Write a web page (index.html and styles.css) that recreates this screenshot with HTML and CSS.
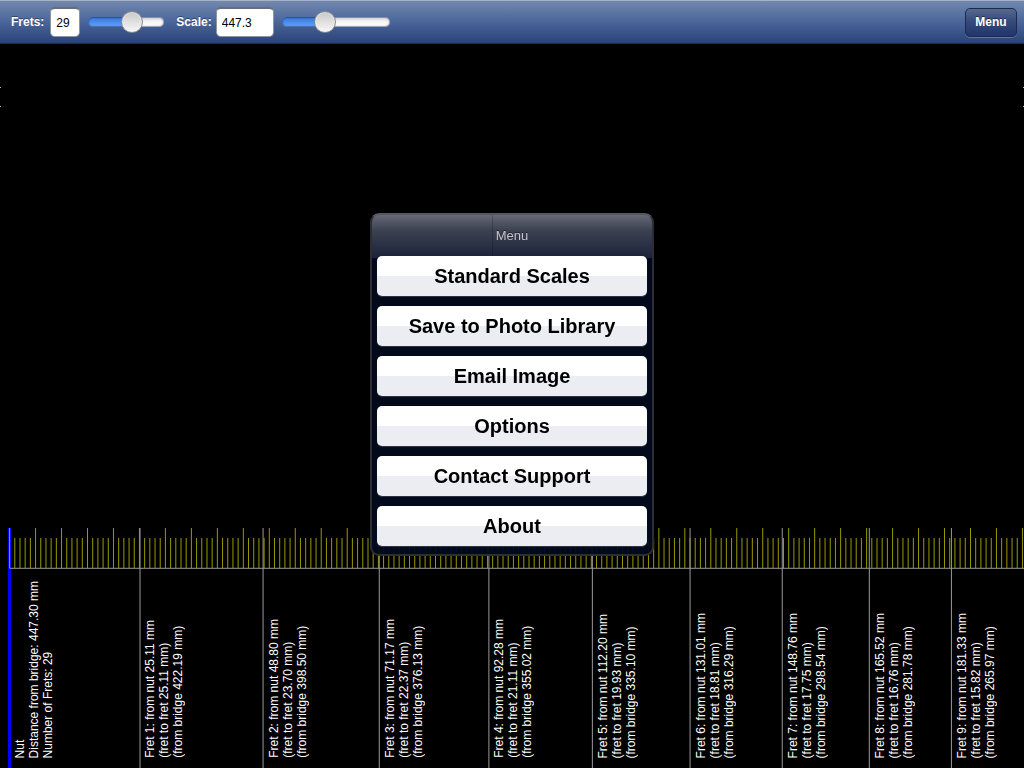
FILE: index.html
```html
<!DOCTYPE html>
<html lang="en">
<head>
<meta charset="utf-8">
<title>Fret Calculator</title>
<link rel="stylesheet" href="styles.css">
</head>
<body>
<header class="toolbar">
  <label class="toolbar-label" for="frets">Frets:</label>
  <input class="field field-small" id="frets" type="text" value="29">
  <input class="slider slider-short" type="range" min="0" max="48" value="29" aria-label="Number of frets">
  <label class="toolbar-label" for="scale">Scale:</label>
  <input class="field" id="scale" type="text" value="447.3">
  <input class="slider" type="range" min="0" max="1183" step="0.1" value="447.3" aria-label="Scale length">
  <button class="menu-button" type="button">Menu</button>
</header>

<main class="stage">
  <div class="marks"><span class="mark"></span><span class="mark"></span></div>
  <section class="board">
    <svg class="ruler" id="ruler" aria-hidden="true"></svg>
    <div class="labels">
      <p class="fret" style="--mm:25.11"><span class="fret-text">Nut<br>Distance from bridge: 447.30 mm<br>Number of Frets: 29</span></p>
      <p class="fret" style="--mm:23.70"><span class="fret-text">Fret 1: from nut 25.11 mm<br>(fret to fret 25.11 mm)<br>(from bridge 422.19 mm)</span></p>
      <p class="fret" style="--mm:22.37"><span class="fret-text">Fret 2: from nut 48.80 mm<br>(fret to fret 23.70 mm)<br>(from bridge 398.50 mm)</span></p>
      <p class="fret" style="--mm:21.11"><span class="fret-text">Fret 3: from nut 71.17 mm<br>(fret to fret 22.37 mm)<br>(from bridge 376.13 mm)</span></p>
      <p class="fret" style="--mm:19.93"><span class="fret-text">Fret 4: from nut 92.28 mm<br>(fret to fret 21.11 mm)<br>(from bridge 355.02 mm)</span></p>
      <p class="fret" style="--mm:18.81"><span class="fret-text">Fret 5: from nut 112.20 mm<br>(fret to fret 19.93 mm)<br>(from bridge 335.10 mm)</span></p>
      <p class="fret" style="--mm:17.75"><span class="fret-text">Fret 6: from nut 131.01 mm<br>(fret to fret 18.81 mm)<br>(from bridge 316.29 mm)</span></p>
      <p class="fret" style="--mm:16.76"><span class="fret-text">Fret 7: from nut 148.76 mm<br>(fret to fret 17.75 mm)<br>(from bridge 298.54 mm)</span></p>
      <p class="fret" style="--mm:15.82"><span class="fret-text">Fret 8: from nut 165.52 mm<br>(fret to fret 16.76 mm)<br>(from bridge 281.78 mm)</span></p>
      <p class="fret" style="--mm:14.93"><span class="fret-text">Fret 9: from nut 181.33 mm<br>(fret to fret 15.82 mm)<br>(from bridge 265.97 mm)</span></p>
    </div>
  </section>
</main>

<div class="overlay">
  <section class="dialog" role="dialog" aria-labelledby="dialog-title">
    <h2 class="dialog-title" id="dialog-title">Menu</h2>
    <div class="dialog-actions">
      <button class="action" type="button">Standard Scales</button>
      <button class="action" type="button">Save to Photo Library</button>
      <button class="action" type="button">Email Image</button>
      <button class="action" type="button">Options</button>
      <button class="action" type="button">Contact Support</button>
      <button class="action" type="button">About</button>
    </div>
  </section>
</div>
<script src="ruler.js"></script>
</body>
</html>
```
FILE: styles.css
```css
* { box-sizing: border-box; }

body {
  margin: 0;
  min-height: 100vh;
  display: flex;
  flex-direction: column;
  overflow: hidden;
  background: #000;
  color: #fff;
  font-family: "Liberation Sans", Arial, sans-serif;
}

.toolbar {
  display: flex;
  align-items: center;
  height: 44px;
  padding: 0 7px 0 11px;
  border-top: 1px solid #a7b2c8;
  border-bottom: 1px solid #1b2c52;
  background: linear-gradient(#7188ae, #4a659a 50%, #2a4377);
}

.toolbar-label {
  font-size: 12px;
  font-weight: bold;
  text-shadow: 0 -1px 0 rgba(0, 0, 0, .4);
}

.field {
  width: 58px;
  height: 30px;
  margin: 0 8px 0 4px;
  padding: 0 5px;
  border: 1px solid #8f959f;
  border-top: 2px solid #6a6d73;
  border-radius: 5px;
  background: #fff;
  color: #000;
  font: 12px "Liberation Sans", Arial, sans-serif;
}

.field-small {
  width: 30px;
  margin-left: 6px;
}

.slider {
  --fill: 40%;
  appearance: none;
  width: 108px;
  height: 22px;
  margin: 0;
  background: none;
}

.slider-short {
  --fill: 57%;
  width: 76px;
  margin-right: 12px;
}

.slider::-webkit-slider-runnable-track {
  height: 10px;
  border-radius: 5px;
  background:
    linear-gradient(rgba(0, 0, 0, .15), rgba(255, 255, 255, .05) 50%, rgba(255, 255, 255, .25)),
    linear-gradient(90deg, #3f86ee var(--fill), #f8f8f8 var(--fill));
  box-shadow: inset 0 0 1px 1px rgba(20, 40, 90, .45);
}

.slider::-webkit-slider-thumb {
  appearance: none;
  width: 22px;
  height: 22px;
  margin-top: -6px;
  border: 1px solid #858a92;
  border-radius: 50%;
  background: linear-gradient(#c8c8c8, #f8f8f8);
  box-shadow: inset 0 0 2px #fff;
}

.menu-button {
  width: 52px;
  height: 29px;
  margin-left: auto;
  padding: 0;
  border: 1px solid #1c2a4c;
  border-radius: 5px;
  background: linear-gradient(#56698f, #33487b 50%, #22356b);
  box-shadow: 0 1px 0 rgba(255, 255, 255, .22);
  color: #fff;
  font: bold 12px "Liberation Sans", Arial, sans-serif;
  text-shadow: 0 -1px 0 rgba(0, 0, 0, .5);
}

.stage {
  flex: 1;
  display: flex;
  flex-direction: column;
  justify-content: space-between;
}

.marks {
  display: flex;
  justify-content: space-between;
  margin-top: 43px;
}

.mark {
  width: 1px;
  height: 20px;
  border: solid #bbb;
  border-width: 1px 0;
}

.board {
  display: grid;
  height: 240px;
}

.ruler,
.labels { grid-area: 1 / 1; }

.ruler {
  width: 100%;
  height: 240px;
}

.labels {
  display: flex;
  align-items: flex-end;
  min-width: 0;
  padding: 0 0 10px 13px;
  overflow: hidden;
}

.fret {
  flex: none;
  width: calc(var(--mm) * 5.194px);
  margin: 0;
  font-size: 12px;
  line-height: 14px;
}

.fret-text {
  display: block;
  writing-mode: vertical-rl;
  transform: rotate(180deg);
  width: 42px;
  white-space: nowrap;
}

.nut { fill: #00f; }
.tick { stroke: #990; }
.line { stroke: #999; }

.overlay {
  position: fixed;
  inset: 0;
  display: flex;
  align-items: center;
  justify-content: center;
}

.dialog {
  width: 284px;
  padding: 0 5px 8px;
  border: 2px solid #2c2e33;
  border-top-color: #55575f;
  border-radius: 9px;
  background:
    linear-gradient(rgba(0, 0, 0, .2), rgba(0, 0, 0, .2)) 43% 0 / 1px 43px no-repeat,
    linear-gradient(#656975, #3d4252 35%, #1b2239) top / 100% 43px no-repeat,
    rgba(1, 9, 28, .96);
}

.dialog-title {
  margin: 0;
  font-size: 13px;
  font-weight: normal;
  line-height: 41px;
  text-align: center;
  color: #c5c6ca;
  text-shadow: 0 -1px 0 rgba(0, 0, 0, .5);
}

.dialog-actions {
  display: flex;
  flex-direction: column;
  gap: 10px;
}

.action {
  height: 40px;
  padding: 2px 0 0;
  border: 0;
  border-radius: 5px;
  background: linear-gradient(#fff 50%, #ecedf2 50%);
  box-shadow: 0 1px 1px rgba(70, 75, 88, .7);
  color: #000;
  font: bold 20px "Liberation Sans", Arial, sans-serif;
}
```
FILE: ruler.js
```js
const SCALE = 5.194;
const ORIGIN = 9.6;
const frets = [25.11, 48.80, 71.17, 92.28, 112.20, 131.01, 148.76, 165.52, 181.33];
const ruler = document.getElementById("ruler");

function add(name, attributes) {
  const node = document.createElementNS("http://www.w3.org/2000/svg", name);
  for (const key in attributes) node.setAttribute(key, attributes[key]);
  ruler.appendChild(node);
}

function vertical(x, top, bottom, kind) {
  add("line", { x1: x, x2: x, y1: top, y2: bottom, class: kind });
}

function draw() {
  ruler.replaceChildren();
  const width = ruler.clientWidth;
  for (let mm = 1; ORIGIN + mm * SCALE < width; mm++) {
    vertical(ORIGIN + mm * SCALE, mm % 5 ? 10 : 0, 40, "tick");
  }
  add("rect", { x: 8, y: 0, width: 3, height: 240, class: "nut" });
  vertical(ORIGIN, 0, 40, "line");
  for (const mm of frets) vertical(ORIGIN + mm * SCALE, 0, 240, "line");
  add("line", { x1: ORIGIN, x2: width, y1: 40.3, y2: 40.3, class: "line" });
}

draw();
window.addEventListener("resize", draw);
```
